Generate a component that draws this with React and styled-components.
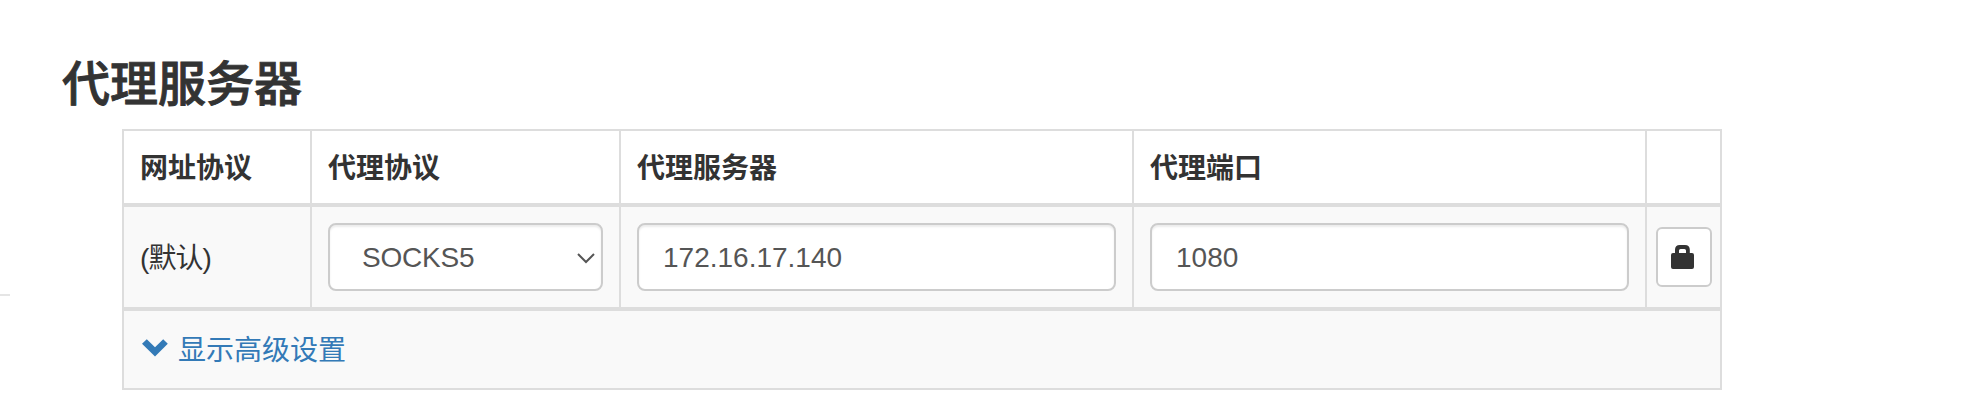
import React from "react";
import styled, { createGlobalStyle } from "styled-components";

const GlobalStyle = createGlobalStyle`
  * { box-sizing: border-box; }
  body {
    margin: 0;
    background: #fff;
    color: #333;
    font: 28px/40px "Liberation Sans", "Noto Sans CJK SC", sans-serif;
  }
`;

const Page = styled.div`
  display: flex;
  height: 420px;
  overflow: hidden;
`;

const Sidebar = styled.aside`
  flex: none;
  width: 10px;
  padding-top: 294px;
`;

const Divider = styled.hr`
  margin: 0;
  border: 0;
  height: 2px;
  background: #e5e5e5;
`;

const Section = styled.section`
  padding: 58px 0 0 52px;
`;

const Title = styled.h3`
  margin: 0 0 18px;
  font-size: 48px;
  line-height: 53px;
  font-weight: 500;
  -webkit-text-stroke: 0.9px #333;
`;

const Table = styled.div`
  display: grid;
  grid-template-columns: 188px 309px 513px 513px 73px;
  grid-template-rows: 72px 108px 77px;
  width: 1600px;
  margin-left: 60px;
  border: 2px solid #ddd;
`;

const Cell = styled.div`
  display: flex;
  align-items: center;
  padding: 0 16px;
  border-right: 2px solid #ddd;
  &:nth-child(5n) {
    border-right: 0;
  }
`;

const HeadCell = styled(Cell)`
  padding-top: 3px;
  font-weight: 700;
`;

const BodyCell = styled(Cell)`
  border-top: 4px solid #ddd;
  border-bottom: 4px solid #ddd;
  background: #f9f9f9;
  padding: ${(p) => (p.$compact ? "0 8px 0 9px" : "0 16px")};
`;

const SchemeLabel = styled.span`
  padding-top: 3px;
  letter-spacing: -0.9px;
`;

const FootCell = styled.div`
  grid-column: 1 / -1;
  display: flex;
  align-items: center;
  padding: 0 16px;
  background: #f9f9f9;
`;

const Field = styled.input`
  width: 100%;
  height: 68px;
  padding: 2px 24px 0;
  border: 2px solid #ccc;
  border-radius: 8px;
  background: #fff;
  box-shadow: inset 0 2px 2px rgba(0, 0, 0, 0.075);
  color: #555;
  font: inherit;
  outline: 0;
`;

const SelectField = styled.button`
  display: flex;
  align-items: center;
  justify-content: space-between;
  width: 100%;
  height: 68px;
  padding: 2px 6px 0 32px;
  border: 2px solid #ccc;
  border-radius: 8px;
  background: #fff;
  box-shadow: inset 0 2px 2px rgba(0, 0, 0, 0.075);
  color: #555;
  font: inherit;
  letter-spacing: -0.2px;
`;

const LockButton = styled.button`
  display: flex;
  align-items: center;
  justify-content: center;
  width: 56px;
  height: 60px;
  padding: 0 3px 0 0;
  border: 2px solid #ccc;
  border-radius: 6px;
  background: #fff;
  color: #333;
`;

const AdvancedLink = styled.a`
  display: flex;
  align-items: center;
  gap: 10px;
  padding: 3px 0 0 2px;
  color: #337ab7;
  text-decoration: none;
`;

const Icon = styled.svg`
  display: block;
  flex: none;
`;

const ToggleIcon = styled(Icon)`
  margin-bottom: 7px;
`;

const SelectArrow = () => (
  <Icon width="18" height="11" viewBox="0 0 18 11" fill="none">
    <path d="M1 1L9 9L17 1" stroke="#555" strokeWidth="2" />
  </Icon>
);

const LockIcon = () => (
  <Icon width="23" height="24" viewBox="0 0 23 24" fill="currentColor">
    <path
      fillRule="evenodd"
      d="M4 8V4.8Q4 0 8.8 0H14Q18.8 0 18.8 4.8V8H21Q23 8 23 10V22Q23 24 21 24H2Q0 24 0 22V10Q0 8 2 8ZM8 8H15V5.6Q15 4 13.4 4H9.6Q8 4 8 5.6Z"
    />
  </Icon>
);

const ChevronIcon = () => (
  <ToggleIcon width="26" height="18" viewBox="0 0 26 18" fill="currentColor">
    <path d="M0 4.8L4.8 0.2L13 8.3L21.2 0.2L25.8 4.8L13 17.4Z" />
  </ToggleIcon>
);

export default function App() {
  return (
    <Page>
      <GlobalStyle />
      <Sidebar>
        <Divider />
      </Sidebar>
      <Section>
        <Title>代理服务器</Title>
        <Table>
          <HeadCell>网址协议</HeadCell>
          <HeadCell>代理协议</HeadCell>
          <HeadCell>代理服务器</HeadCell>
          <HeadCell>代理端口</HeadCell>
          <HeadCell />
          <BodyCell>
            <SchemeLabel>(默认)</SchemeLabel>
          </BodyCell>
          <BodyCell>
            <SelectField type="button">
              SOCKS5
              <SelectArrow />
            </SelectField>
          </BodyCell>
          <BodyCell>
            <Field defaultValue="172.16.17.140" />
          </BodyCell>
          <BodyCell>
            <Field defaultValue="1080" />
          </BodyCell>
          <BodyCell $compact>
            <LockButton type="button" aria-label="lock">
              <LockIcon />
            </LockButton>
          </BodyCell>
          <FootCell>
            <AdvancedLink href="#">
              <ChevronIcon />
              显示高级设置
            </AdvancedLink>
          </FootCell>
        </Table>
      </Section>
    </Page>
  );
}
